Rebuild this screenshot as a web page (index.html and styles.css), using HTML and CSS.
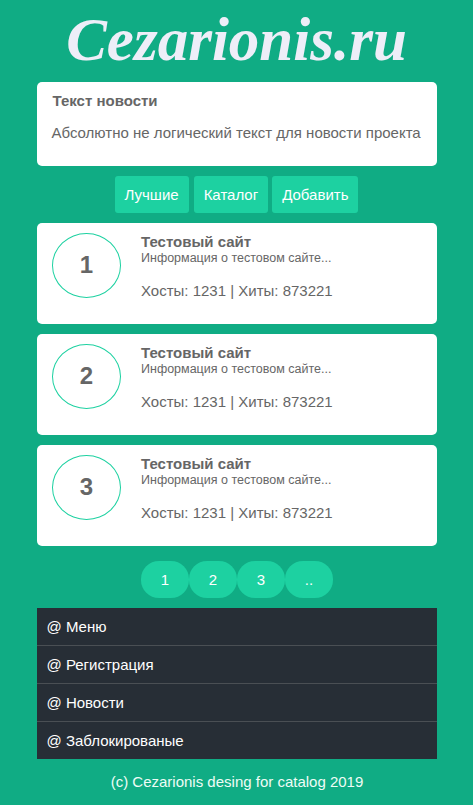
FILE: index.html
```html
<!DOCTYPE html>
<html lang="ru">
<head>
    <meta charset="UTF-8">
    <meta name="viewport" content="width=device-width, initial-scale=1.0">
    <title>Cezarionis.ru</title>
    <link rel="stylesheet" href="styles.css">
</head>
<body>
    <div class="wrapper">
        <div class="logo">Cezarionis.ru</div>

        <div class="news">
            <div class="news-title">Текст новости</div>
            <div class="news-text">Абсолютно не логический текст для новости проекта</div>
        </div>

        <div class="tabs">
            <a class="tab" href="#">Лучшие</a>
            <a class="tab" href="#">Каталог</a>
            <a class="tab" href="#">Добавить</a>
        </div>

        <div class="site">
            <div class="site-num">1</div>
            <div class="site-info">
                <div class="site-name">Тестовый сайт</div>
                <div class="site-desc">Информация о тестовом сайте...</div>
                <div class="site-stats">Хосты: 1231 | Хиты: 873221</div>
            </div>
        </div>
        <div class="site">
            <div class="site-num">2</div>
            <div class="site-info">
                <div class="site-name">Тестовый сайт</div>
                <div class="site-desc">Информация о тестовом сайте...</div>
                <div class="site-stats">Хосты: 1231 | Хиты: 873221</div>
            </div>
        </div>
        <div class="site">
            <div class="site-num">3</div>
            <div class="site-info">
                <div class="site-name">Тестовый сайт</div>
                <div class="site-desc">Информация о тестовом сайте...</div>
                <div class="site-stats">Хосты: 1231 | Хиты: 873221</div>
            </div>
        </div>

        <div class="pages">
            <a class="page" href="#">1</a>
            <a class="page" href="#">2</a>
            <a class="page" href="#">3</a>
            <a class="page" href="#">..</a>
        </div>

        <div class="menu">
            <a class="menu-item" href="#">@ Меню</a>
            <a class="menu-item" href="#">@ Регистрация</a>
            <a class="menu-item" href="#">@ Новости</a>
            <a class="menu-item" href="#">@ Заблокированые</a>
        </div>

        <div class="footer">(c) Cezarionis desing for catalog 2019</div>
    </div>
</body>
</html>
```

FILE: styles.css
```css
:root {
    --background-color: #10ac84;
    --button-color: #1dd1a1;
    --text-color: #666;
    --menu-color: #272e36;
}

html, body {
    margin: 0;
    padding: 0;
}

body {
    background-color: var(--background-color);
    color: var(--text-color);
    font-family: "Liberation Sans", Arial, sans-serif;
    height: 805px;
    overflow: hidden;
}

a {
    text-decoration: none;
    color: #fff;
}

.wrapper {
    width: 400px;
    margin: 0 auto;
}

.logo {
    height: 82px;
    font-family: "Liberation Serif", "Times New Roman", serif;
    font-size: 61px;
    line-height: 79px;
    font-weight: bold;
    font-style: italic;
    text-align: center;
    color: #eeeef8;
}

.news {
    height: 84px;
    box-sizing: border-box;
    padding: 11px 15px 0;
    background-color: #fff;
    border-radius: 5px;
}

.news-title {
    padding-left: 1px;
    font-size: 15px;
    line-height: 16px;
    font-weight: bold;
}

.news-text {
    margin-top: 15px;
    font-size: 15px;
    line-height: 18px;
    white-space: nowrap;
}

.tabs {
    display: flex;
    justify-content: center;
    gap: 4px;
    margin: 10px 0;
}

.tab {
    padding: 0 10px;
    height: 37px;
    line-height: 37px;
    font-size: 15px;
    background-color: var(--button-color);
    border-radius: 3px;
}

.tab:nth-child(2) {
    margin-left: 1px;
}

.site {
    display: flex;
    height: 101px;
    box-sizing: border-box;
    padding: 10px 15px;
    margin-bottom: 10px;
    background-color: #fff;
    border-radius: 5px;
}

.site-num {
    flex: none;
    width: 66px;
    height: 63px;
    padding-left: 1px;
    border: 1px solid var(--button-color);
    border-radius: 50%;
    font-size: 24px;
    font-weight: bold;
    line-height: 62px;
    text-align: center;
}

.site-info {
    margin-left: 20.5px;
}

.site-name {
    font-size: 15px;
    line-height: 16px;
    font-weight: bold;
    margin-top: 1px;
}

.site-desc {
    font-size: 12.5px;
    line-height: 16px;
}

.site-stats {
    margin-top: 16px;
    font-size: 15px;
    line-height: 18px;
}

.pages {
    display: flex;
    justify-content: center;
    margin: 15px 0 10px;
}

.page {
    width: 48px;
    height: 37px;
    line-height: 37px;
    text-align: center;
    text-indent: 1px;
    font-size: 15px;
    background-color: var(--button-color);
    border-radius: 18px;
}

.menu {
    background-color: var(--menu-color);
}

.menu-item {
    display: block;
    height: 38px;
    box-sizing: border-box;
    padding-left: 10px;
    line-height: 37px;
    font-size: 15px;
    border-bottom: 1px solid #4a4f54;
}

.menu-item:last-child {
    height: 37px;
    border-bottom: none;
}

.footer {
    margin-top: 14px;
    padding-left: 1px;
    font-size: 15px;
    line-height: 18px;
    text-align: center;
    color: #eefcf6;
}
```
